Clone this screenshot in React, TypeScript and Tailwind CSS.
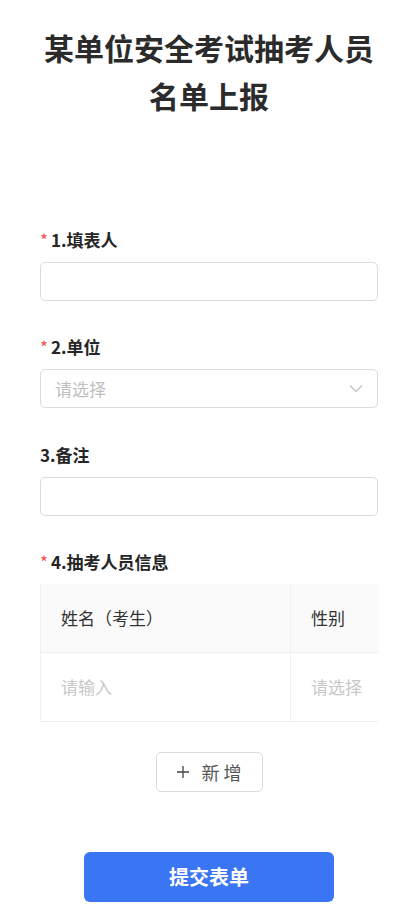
import React from "react";

const font = { fontFamily: '"Noto Sans CJK SC", "Noto Sans", sans-serif' };

function Label({ text, required }: { text: string; required?: boolean }) {
  return (
    <div className="flex items-center h-6 text-[17px] font-bold text-[#262626] leading-6">
      {required && <span className="text-[#f5504f] mr-[3px] text-[17px] font-normal">*</span>}
      <span>{text}</span>
    </div>
  );
}

export default function App() {
  return (
    <div className="w-[418px] min-h-[922px] bg-white" style={font}>
      <div className="pt-[23px] px-[40px] text-center text-[30px] leading-[48px] font-bold text-[#2b2b2b]">
        某单位安全考试抽考人员名单上报
      </div>

      <div className="px-[40px] mt-[109px] flex flex-col">
        <Label text="1.填表人" required />
        <div className="mt-[10px] h-[39px] border border-[#dcdcdc] rounded-[5px]" />

        <div className="mt-[34px]">
          <Label text="2.单位" required />
        </div>
        <div className="mt-[10px] h-[39px] border border-[#dcdcdc] rounded-[5px] flex items-center justify-between pl-[14px] pr-[14px]">
          <span className="text-[17px] text-[#bfbfbf]">请选择</span>
          <svg width="14" height="9" viewBox="0 0 14 9" fill="none">
            <path d="M1 1.5 L7 7.5 L13 1.5" stroke="#c4c4c4" strokeWidth="1.3" />
          </svg>
        </div>

        <div className="mt-[35px]">
          <Label text="3.备注" />
        </div>
        <div className="mt-[10px] h-[39px] border border-[#dcdcdc] rounded-[5px]" />

        <div className="mt-[34px]">
          <Label text="4.抽考人员信息" required />
        </div>
        <div className="mt-[10px] overflow-hidden">
          <div className="flex w-[420px] border-l border-[#efefef]">
            <div className="w-[250px] border-r border-[#efefef]">
              <div className="h-[69px] bg-[#fafafa] border-b border-[#efefef] flex items-center pl-[20px] text-[17px] text-[#333]">
                姓名（考生）
              </div>
              <div className="h-[69px] border-b border-[#efefef] flex items-center pl-[20px] text-[17px] text-[#c8c8c8]">
                请输入
              </div>
            </div>
            <div className="flex-1">
              <div className="h-[69px] bg-[#fafafa] border-b border-[#efefef] flex items-center pl-[20px] text-[17px] text-[#333]">
                性别
              </div>
              <div className="h-[69px] border-b border-[#efefef] flex items-center pl-[20px] text-[17px] text-[#c8c8c8]">
                请选择
              </div>
            </div>
          </div>
        </div>

        <div className="mt-[30px] flex justify-center">
          <div className="w-[107px] h-[40px] border border-[#dcdcdc] rounded-[5px] flex items-center justify-center text-[18px] text-[#555]">
            <svg width="12" height="12" viewBox="0 0 12 12" className="mr-[13px]">
              <path d="M6 0 V12 M0 6 H12" stroke="#444" strokeWidth="1.3" />
            </svg>
            <span className="tracking-[4px] mr-[-4px]">新增</span>
          </div>
        </div>

        <div className="mt-[60px] flex justify-center">
          <div className="w-[250px] h-[50px] bg-[#3a76f3] rounded-[6px] flex items-center justify-center text-white text-[20px] font-bold">
            提交表单
          </div>
        </div>
      </div>
    </div>
  );
}
